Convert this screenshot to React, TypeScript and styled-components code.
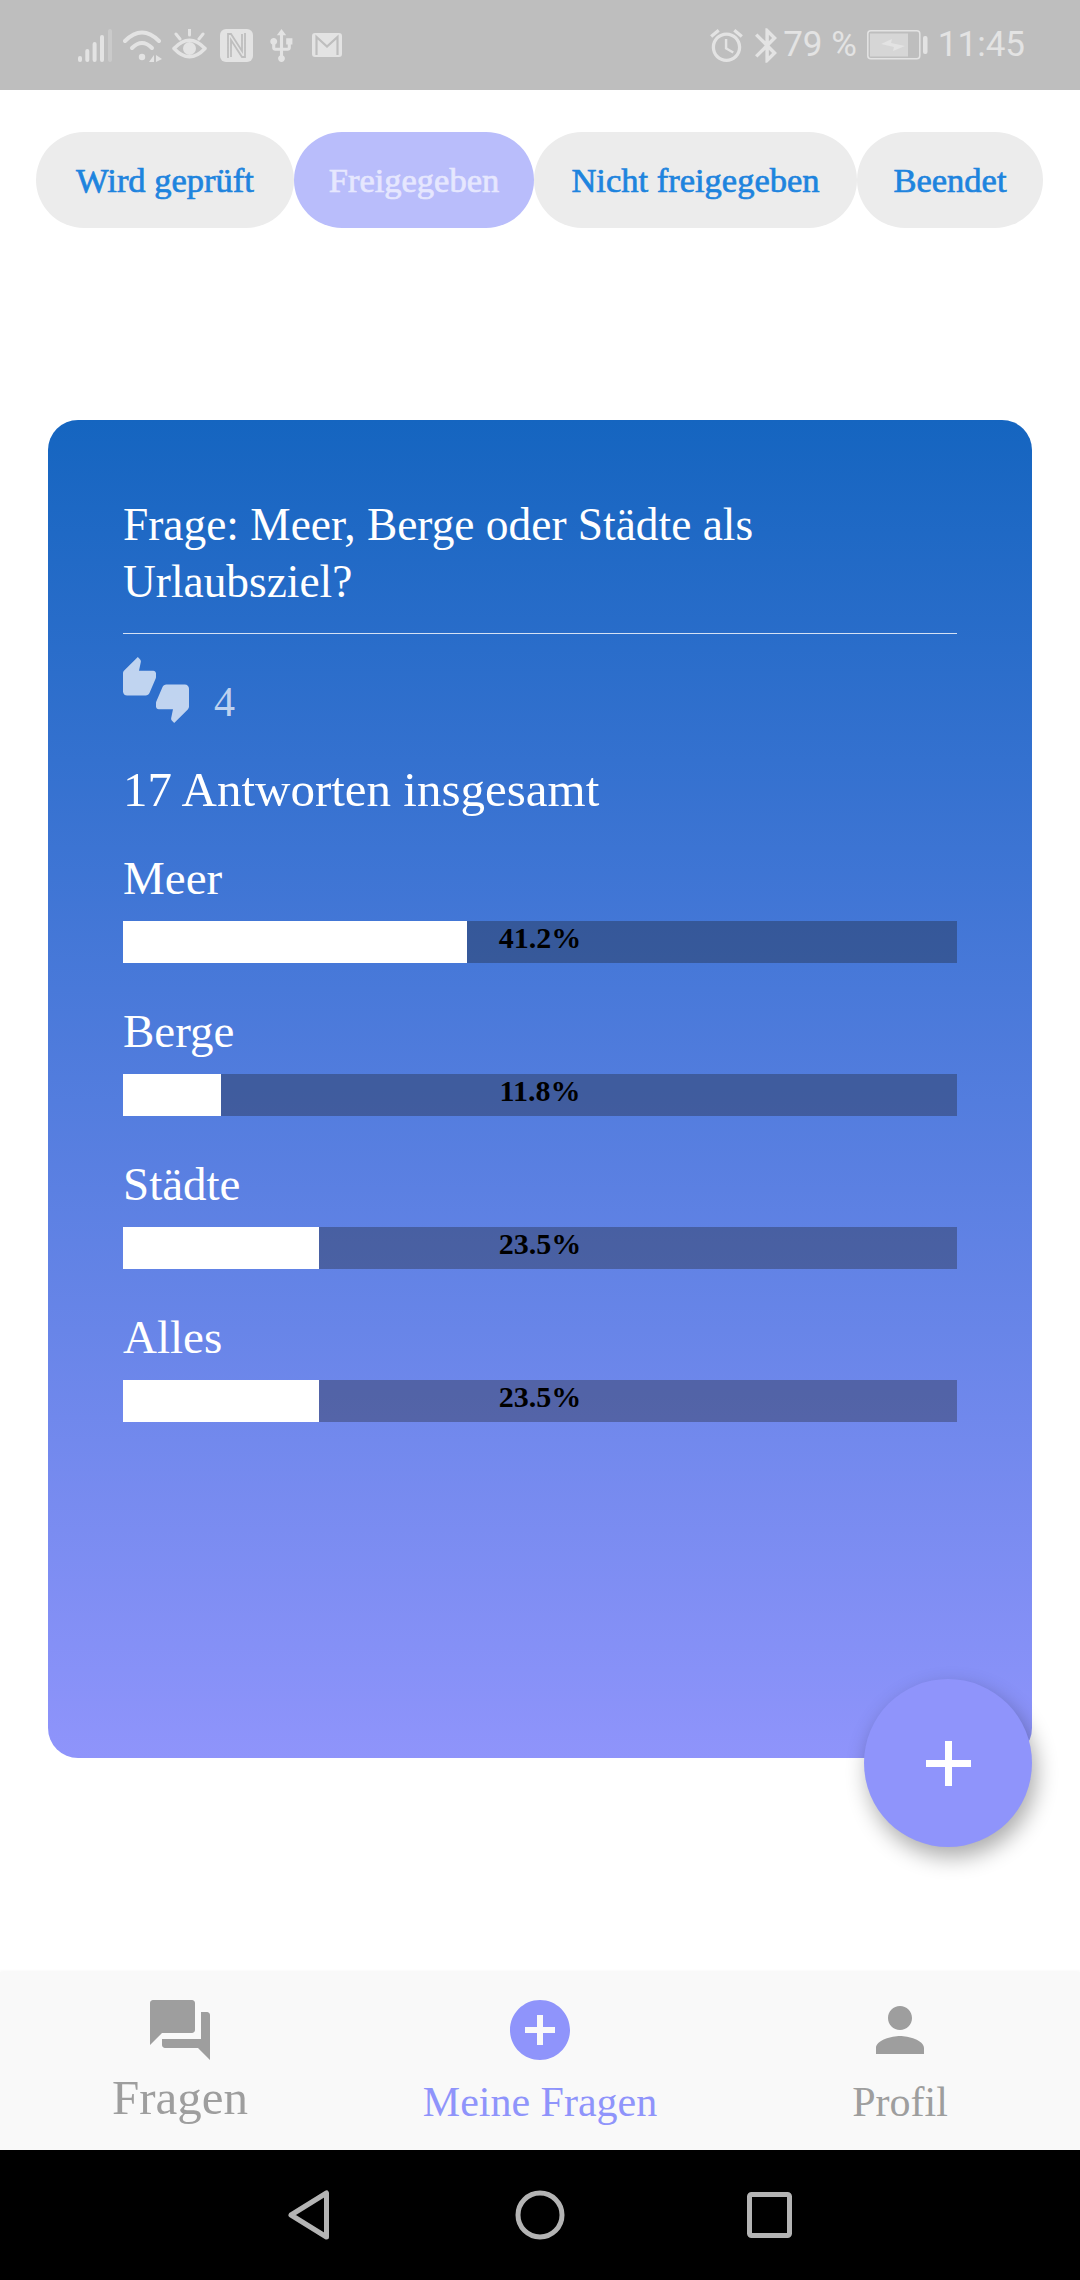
import React from "react";
import styled, { createGlobalStyle } from "styled-components";
import { MdAddCircle, MdPerson, MdQuestionAnswer, MdThumbsUpDown } from "react-icons/md";

const GlobalStyle = createGlobalStyle`
  html, body {
    margin: 0;
    padding: 0;
    background: #fff;
  }
  * {
    box-sizing: border-box;
  }
`;

const Screen = styled.div`
  width: 1080px;
  height: 2280px;
  display: flex;
  flex-direction: column;
  overflow: hidden;
  background: #fff;
  font-family: "Liberation Serif", serif;
`;

/* status bar */
const StatusBar = styled.div`
  height: 90px;
  flex: none;
  display: flex;
  justify-content: space-between;
  align-items: center;
  padding: 0 55px 0 78px;
  background: #bebebe;
`;

const StatusGroup = styled.div`
  display: flex;
  align-items: center;
`;

const StatusIcon = styled.svg<{ $ml?: number }>`
  display: block;
  margin-left: ${(p) => p.$ml ?? 0}px;
  fill: #e3e3e3;
  color: #e3e3e3;
`;

const StatusText = styled.span<{ $ml: number }>`
  margin-left: ${(p) => p.$ml}px;
  font-family: Roboto, sans-serif;
  font-weight: 400;
  font-size: 35px;
  line-height: 40px;
  color: #e3e3e3;
`;

/* filter tabs */
const Tabs = styled.div`
  flex: none;
  display: flex;
  padding: 42px 36px 0;
`;

const Tab = styled.div<{ $active?: boolean; $width: number }>`
  width: ${(p) => p.$width}px;
  height: 96px;
  display: flex;
  align-items: center;
  justify-content: center;
  border-radius: 48px;
  font-size: 34.5px;
  -webkit-text-stroke: 0.7px currentColor;
  background: ${(p) => (p.$active ? "#b9bdfb" : "#ececec")};
  color: ${(p) => (p.$active ? "#e6e7fe" : "#1e84de")};
`;

/* main content */
const Main = styled.div`
  position: relative;
  flex: 1;
  padding: 192px 48px 0;
`;

const Card = styled.div`
  height: 1338px;
  padding: 77px 75px 0;
  border-radius: 30px;
  background: linear-gradient(180deg, #1565c0 0%, #8f94fb 100%);
  color: #fff;
`;

const Question = styled.div`
  font-size: 45.4px;
  line-height: 57px;
  padding-bottom: 22px;
  border-bottom: 1px solid rgba(255, 255, 255, 0.8);
`;

const Votes = styled.div`
  display: flex;
  align-items: flex-start;
  margin-top: 23px;
  height: 66px;
  color: rgba(255, 255, 255, 0.7);
`;

const VoteCount = styled.span`
  margin: 20px 0 0 25px;
  font-size: 42px;
  line-height: 50px;
`;

const Total = styled.div`
  margin-top: 38px;
  font-size: 49px;
  line-height: 57px;
`;

const Options = styled.div`
  display: flex;
  flex-direction: column;
  gap: 42px;
  margin-top: 34px;
`;

const OptionLabel = styled.div`
  font-size: 47px;
  line-height: 52px;
  margin-bottom: 17px;
`;

const Track = styled.div`
  position: relative;
  height: 42px;
  background: rgba(25, 25, 25, 0.32);
`;

const Fill = styled.div`
  height: 100%;
  background: #fff;
`;

const Percent = styled.span`
  position: absolute;
  top: 0;
  left: 0;
  right: 0;
  text-align: center;
  font-size: 30px;
  font-weight: 700;
  line-height: 34px;
  color: #000;
`;

const Fab = styled.button`
  position: absolute;
  right: 48px;
  bottom: 125px;
  width: 168px;
  height: 168px;
  padding: 0;
  border: none;
  border-radius: 50%;
  display: flex;
  align-items: center;
  justify-content: center;
  background: #8f94fb;
  box-shadow: 4px 10px 22px rgba(0, 0, 0, 0.33);
`;

/* bottom tab bar */
const BottomBar = styled.div`
  flex: none;
  height: 178px;
  display: grid;
  grid-template-columns: repeat(3, 1fr);
  padding-top: 22px;
  background: #f9f9f9;
  box-shadow: 0 -1px 3px rgba(0, 0, 0, 0.04);
`;

const BarItem = styled.div<{ $active?: boolean; $large?: boolean }>`
  display: flex;
  flex-direction: column;
  align-items: center;
  color: ${(p) => (p.$active ? "#8f94fb" : "#9e9e9e")};

  span {
    margin-top: ${(p) => (p.$large ? 2 : 6)}px;
    font-size: ${(p) => (p.$large ? 49 : 42)}px;
    line-height: 60px;
    white-space: nowrap;
  }
`;

const BarIcon = styled.div`
  height: 72px;
`;

/* android navigation */
const SystemNav = styled.div`
  flex: none;
  height: 130px;
  display: flex;
  align-items: center;
  justify-content: center;
  gap: 171px;
  background: #000;
`;

const NavGlyph = styled.svg`
  fill: none;
  stroke: #b4b4b4;
  stroke-width: 5;
  stroke-linejoin: round;
`;

const results = [
  { label: "Meer", value: 41.2 },
  { label: "Berge", value: 11.8 },
  { label: "Städte", value: 23.5 },
  { label: "Alles", value: 23.5 },
];

const tabs = [
  { label: "Wird geprüft", width: 258 },
  { label: "Freigegeben", width: 240, active: true },
  { label: "Nicht freigegeben", width: 323 },
  { label: "Beendet", width: 186 },
];

const App: React.FC = () => {
  return (
    <Screen>
      <GlobalStyle />
      <StatusBar>
        <StatusGroup>
          <StatusIcon width="35" height="33" viewBox="0 0 35 33">
            <rect x="0" y="27" width="4" height="6" rx="2" />
            <rect x="7.3" y="20" width="4" height="13" rx="2" />
            <rect x="14.6" y="13" width="4" height="20" rx="2" />
            <rect x="22" y="6" width="4" height="27" rx="2" />
            <rect x="30" y="0" width="4" height="33" rx="2" opacity="0.35" />
          </StatusIcon>
          <StatusIcon $ml={10} width="39" height="33" viewBox="0 0 39 33">
            <path d="M2 12 Q19 -5 36 12" fill="none" stroke="currentColor" strokeWidth="4" strokeLinecap="round" />
            <path d="M9 19 Q19 9 29 19" fill="none" stroke="currentColor" strokeWidth="4" strokeLinecap="round" />
            <circle cx="19" cy="28" r="3.2" />
            <path d="M26 33 L31 26 V33 Z M33 26 L39 30 L33 33 Z" />
          </StatusIcon>
          <StatusIcon $ml={10} width="35" height="32" viewBox="0 0 35 32">
            <path d="M2 19.5 Q17.5 3 33 19.5 Q17.5 36 2 19.5 Z" fill="none" stroke="currentColor" strokeWidth="3.5" strokeLinejoin="round" />
            <circle cx="17.5" cy="19.5" r="6.5" />
            <path d="M17.5 0 V6 M4 5 L8 10 M31 5 L27 10" fill="none" stroke="currentColor" strokeWidth="3" strokeLinecap="round" />
          </StatusIcon>
          <StatusIcon $ml={13} width="33" height="33" viewBox="0 0 33 33">
            <rect width="33" height="33" rx="6" />
            <path d="M8 29 V5 H11 L22 22 V5 M25 4 V28 H22 L11 11 V28" fill="none" stroke="#bebebe" strokeWidth="1.8" />
          </StatusIcon>
          <StatusIcon $ml={17} width="23" height="33" viewBox="4.8 1 14.4 21.2">
            <path d="M15 7v4h1v2h-3V5h2l-3-4-3 4h2v8H8v-2.07c.7-.37 1.2-1.08 1.2-1.93 0-1.21-.99-2.2-2.2-2.2-1.21 0-2.2.99-2.2 2.2 0 .85.5 1.56 1.2 1.93V13c0 1.11.89 2 2 2h3v3.05c-.71.37-1.2 1.1-1.2 1.95 0 1.22.99 2.2 2.2 2.2 1.21 0 2.2-.98 2.2-2.2 0-.85-.49-1.58-1.2-1.95V15h3c1.11 0 2-.89 2-2v-2h1V7h-4z" />
          </StatusIcon>
          <StatusIcon $ml={19} width="30" height="24" viewBox="0 0 30 24">
            <rect width="30" height="24" rx="3" />
            <path d="M4.5 22 V4 L15 13.5 L25.5 4 V22" fill="none" stroke="#bebebe" strokeWidth="2.2" />
          </StatusIcon>
        </StatusGroup>
        <StatusGroup>
          <StatusIcon width="33" height="33" viewBox="2 1.86 20 20.14">
            <path d="M22 5.72l-4.6-3.86-1.29 1.53 4.6 3.86L22 5.72zM7.88 3.39L6.6 1.86 2 5.71l1.29 1.53 4.59-3.85zM12.5 8H11v6l4.75 2.85.75-1.23-4-2.37V8zM12 4c-4.97 0-9 4.03-9 9s4.03 9 9 9c4.97 0 9-4.03 9-9s-4.03-9-9-9zm0 16c-3.87 0-7-3.13-7-7s3.13-7 7-7 7 3.13 7 7-3.13 7-7 7z" />
          </StatusIcon>
          <StatusIcon $ml={12} width="22" height="35" viewBox="5 2 12.71 20">
            <path d="M17.71 7.71L12 2h-1v7.59L6.41 5 5 6.41 10.59 12 5 17.59 6.41 19 11 14.41V22h1l5.71-5.71-4.3-4.29 4.3-4.29zM13 5.83l1.88 1.88L13 9.59V5.83zm1.88 10.46L13 18.17v-3.76l1.88 1.88z" />
          </StatusIcon>
          <StatusText $ml={6}>79 %</StatusText>
          <StatusIcon $ml={10} width="61" height="30" viewBox="0 0 61 30">
            <rect x="0.8" y="0.8" width="52" height="28" rx="3" fill="none" stroke="currentColor" strokeWidth="1.5" />
            <rect x="3" y="3.5" width="38" height="23" fill="#d6d6d6" />
            <path d="M14 14 L25 9 L24 13 L38 16 L26 21 L27 17 Z" />
            <rect x="56" y="6" width="4.5" height="18" rx="2" />
          </StatusIcon>
          <StatusText $ml={10}>11:45</StatusText>
        </StatusGroup>
      </StatusBar>

      <Tabs>
        {tabs.map((t) => (
          <Tab key={t.label} $active={t.active} $width={t.width}>
            {t.label}
          </Tab>
        ))}
      </Tabs>

      <Main>
        <Card>
          <Question>Frage: Meer, Berge oder Städte als Urlaubsziel?</Question>
          <Votes>
            <MdThumbsUpDown size={66} />
            <VoteCount>4</VoteCount>
          </Votes>
          <Total>17 Antworten insgesamt</Total>
          <Options>
            {results.map((r) => (
              <div key={r.label}>
                <OptionLabel>{r.label}</OptionLabel>
                <Track>
                  <Fill style={{ width: `${r.value}%` }} />
                  <Percent>{r.value}%</Percent>
                </Track>
              </div>
            ))}
          </Options>
        </Card>
        <Fab>
          <svg width="45" height="45" viewBox="0 0 45 45">
            <path d="M0 22.5 H45 M22.5 0 V45" stroke="#fff" strokeWidth="7" />
          </svg>
        </Fab>
      </Main>

      <BottomBar>
        <BarItem $large>
          <BarIcon>
            <MdQuestionAnswer size={72} />
          </BarIcon>
          <span>Fragen</span>
        </BarItem>
        <BarItem $active>
          <BarIcon>
            <MdAddCircle size={72} />
          </BarIcon>
          <span>Meine Fragen</span>
        </BarItem>
        <BarItem>
          <BarIcon>
            <MdPerson size={72} />
          </BarIcon>
          <span>Profil</span>
        </BarItem>
      </BottomBar>

      <SystemNav>
        <NavGlyph width="60" height="60" viewBox="0 0 60 60">
          <path d="M47.5 8 V52 L12 30 Z" />
        </NavGlyph>
        <NavGlyph width="60" height="60" viewBox="0 0 60 60">
          <circle cx="30" cy="30" r="22" />
        </NavGlyph>
        <NavGlyph width="60" height="60" viewBox="0 0 60 60">
          <rect x="8.5" y="9.5" width="40" height="41" rx="2" />
        </NavGlyph>
      </SystemNav>
    </Screen>
  );
};

export default App;
